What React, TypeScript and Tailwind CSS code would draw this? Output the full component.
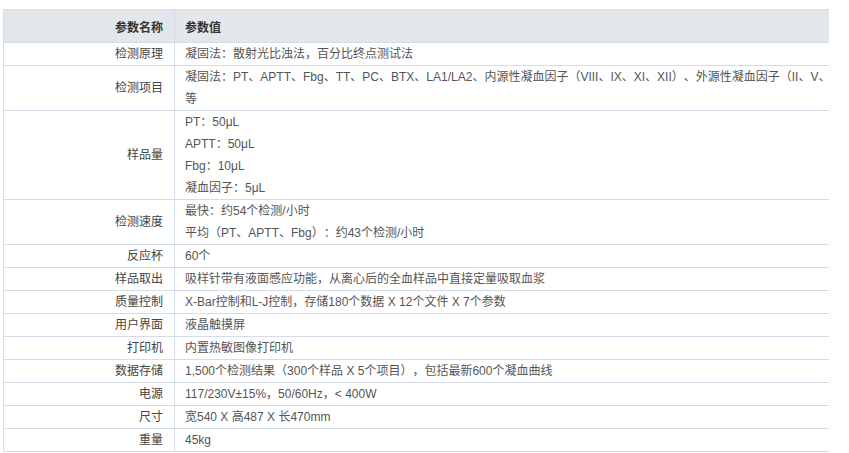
type SpecRow = {
  label: string;
  lines: string[];
};

const rows: SpecRow[] = [
  { label: "检测原理", lines: ["凝固法：散射光比浊法，百分比终点测试法"] },
  {
    label: "检测项目",
    lines: [
      "凝固法：PT、APTT、Fbg、TT、PC、BTX、LA1/LA2、内源性凝血因子（VIII、IX、XI、XII）、外源性凝血因子（II、V、VII、X）",
      "等",
    ],
  },
  { label: "样品量", lines: ["PT：50μL", "APTT：50μL", "Fbg：10μL", "凝血因子：5μL"] },
  { label: "检测速度", lines: ["最快：约54个检测/小时", "平均（PT、APTT、Fbg）：约43个检测/小时"] },
  { label: "反应杯", lines: ["60个"] },
  { label: "样品取出", lines: ["吸样针带有液面感应功能，从离心后的全血样品中直接定量吸取血浆"] },
  { label: "质量控制", lines: ["X-Bar控制和L-J控制，存储180个数据 X 12个文件 X 7个参数"] },
  { label: "用户界面", lines: ["液晶触摸屏"] },
  { label: "打印机", lines: ["内置热敏图像打印机"] },
  { label: "数据存储", lines: ["1,500个检测结果（300个样品 X 5个项目），包括最新600个凝血曲线"] },
  { label: "电源", lines: ["117/230V±15%，50/60Hz，< 400W"] },
  { label: "尺寸", lines: ["宽540 X 高487 X 长470mm"] },
  { label: "重量", lines: ["45kg"] },
];

export default function App() {
  return (
    <div className="h-[453px] w-[849px] bg-white pt-[9px] pl-[3px] font-['Liberation_Sans','Noto_Sans_CJK_SC',sans-serif] text-[12px] [text-spacing-trim:space-all]">
      {/* the spec table is wider than its box and gets clipped on the right, as in the page */}
      <div className="w-[826px] overflow-hidden border-t border-l border-[#d5dce9]">
        <div className="flex h-[33px] w-[900px] border-b border-[#d5dce9] bg-[#e3e6ea] font-bold text-[#333]">
          <div className="flex w-[171px] shrink-0 items-end justify-end border-r border-[#d5dce9] pr-[11px] pb-[3px] leading-[22px]">
            参数名称
          </div>
          <div className="flex items-end pl-[10px] pb-[3px] leading-[22px]">参数值</div>
        </div>
        {rows.map((row) => (
          <div key={row.label} className="flex w-[900px] border-b border-[#d5dce9]">
            <div className="flex w-[171px] shrink-0 items-center justify-end border-r border-[#d5dce9] pr-[11px] leading-[22px] text-[#444]">
              {row.label}
            </div>
            <div className="flex flex-col pl-[10px] leading-[22px] text-[#555]">
              {row.lines.map((line) => (
                <span key={line} className="whitespace-nowrap">
                  {line}
                </span>
              ))}
            </div>
          </div>
        ))}
      </div>
    </div>
  );
}
